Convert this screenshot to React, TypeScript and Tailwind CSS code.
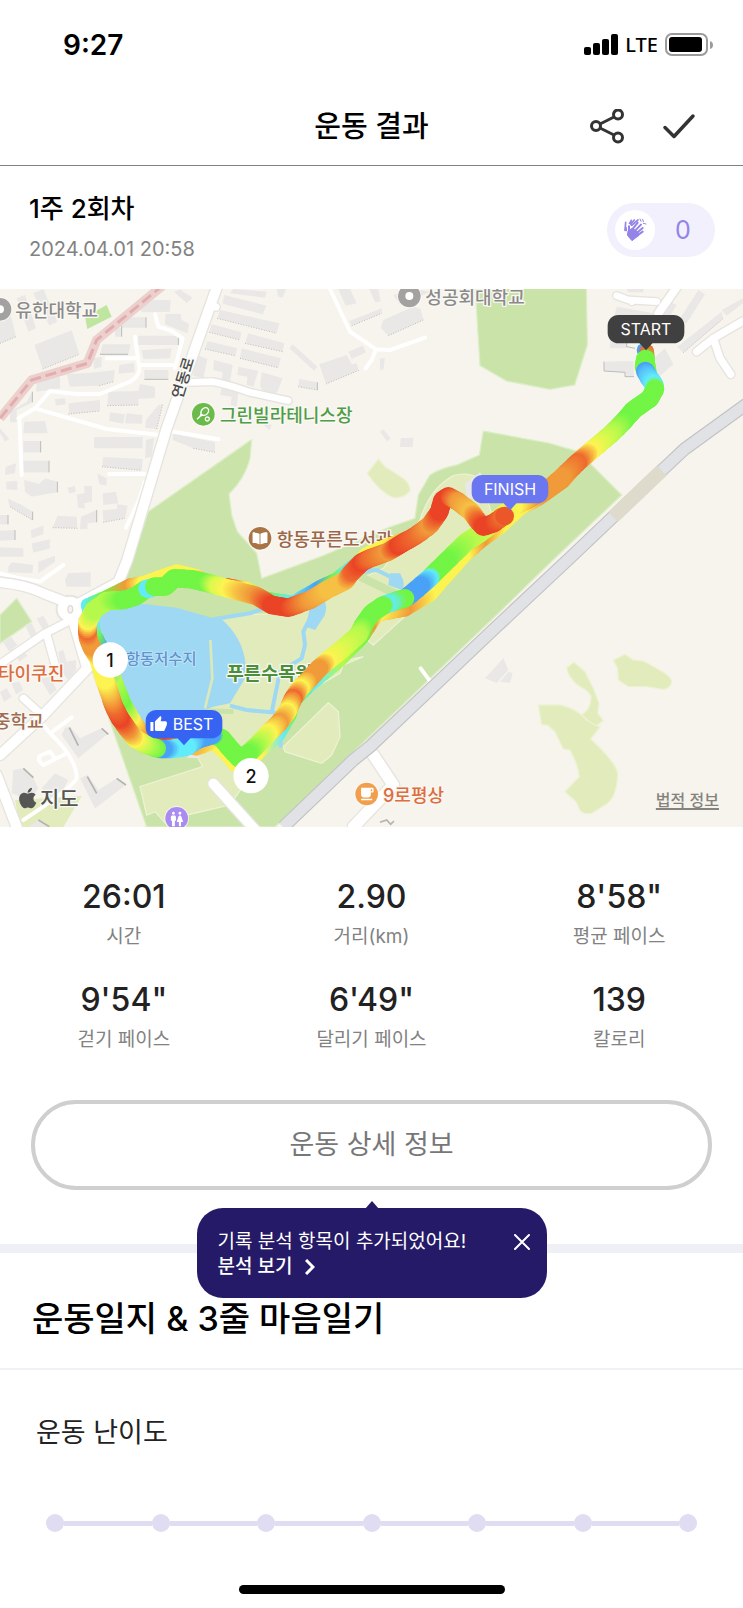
import { useState } from "react";
import { FaApple, FaBookOpen } from "react-icons/fa";
import { MdLocalCafe, MdSportsTennis, MdThumbUp, MdWc } from "react-icons/md";

type Stop = [number, number, string];

const RED = "#ea4326";
const TOMATO = "#ee6a2e";
const ORANGE = "#f09a3a";
const AMBER = "#f6c044";
const YELLOW = "#fdf351";
const LIME = "#b4f94c";
const GREEN = "#72f545";
const CYAN = "#62ecfb";
const BLUE = "#4aa2f7";

// Earlier lap, partly hidden by the later one.
const firstLap: Stop[] = [
  [1930, 195, BLUE], [1942, 198, TOMATO], [1945, 230, GREEN], [1950, 260, GREEN], [1955, 300, CYAN], [1950, 340, GREEN],
  [1860, 425, GREEN], [1770, 500, YELLOW], [1690, 590, ORANGE], [1620, 640, ORANGE], [1560, 672, YELLOW],
  [1500, 728, YELLOW], [1440, 772, ORANGE], [1392, 815, YELLOW], [1345, 868, YELLOW], [1290, 930, YELLOW],
  [1215, 975, ORANGE], [1130, 990, YELLOW], [1108, 1025, ORANGE], [1085, 1060, GREEN], [1010, 1135, LIME],
  [930, 1200, CYAN], [880, 1250, GREEN], [870, 1290, GREEN], [835, 1350, CYAN], [770, 1410, YELLOW],
  [705, 1440, YELLOW], [680, 1410, YELLOW], [640, 1373, YELLOW], [590, 1392, AMBER], [530, 1380, ORANGE],
  [480, 1372, RED], [435, 1352, TOMATO], [400, 1300, YELLOW], [372, 1250, GREEN], [345, 1180, LIME],
  [305, 1085, BLUE], [282, 1045, GREEN], [278, 1010, CYAN], [262, 960, CYAN], [320, 935, GREEN],
  [390, 900, ORANGE], [430, 893, YELLOW], [500, 868, YELLOW], [530, 858, YELLOW], [590, 872, YELLOW],
  [640, 902, RED], [685, 900, RED], [740, 910, YELLOW], [800, 940, GREEN], [880, 952, CYAN],
  [960, 905, BLUE], [1010, 882, GREEN], [1050, 850, CYAN], [1100, 806, YELLOW], [1160, 780, YELLOW],
  [1230, 755, ORANGE],
];

const secondLap: Stop[] = [
  [1936, 222, GREEN], [1932, 245, GREEN], [1934, 252, GREEN], [1936, 258, BLUE], [1945, 275, "#57c4fa"], [1962, 298, CYAN], [1965, 312, GREEN],
  [1950, 340, GREEN], [1900, 375, GREEN], [1870, 410, GREEN], [1835, 445, LIME], [1800, 475, "#dcf94e"], [1770, 500, YELLOW],
  [1733, 532, TOMATO], [1685, 578, ORANGE], [1650, 608, ORANGE], [1590, 640, ORANGE], [1540, 665, YELLOW],
  [1440, 745, "#c9f94c"], [1400, 770, LIME], [1340, 828, GREEN], [1295, 872, GREEN], [1288, 880, CYAN], [1262, 902, BLUE],
  [1235, 925, BLUE], [1222, 936, BLUE], [1215, 940, GREEN], [1195, 945, GREEN], [1158, 958, CYAN], [1148, 962, GREEN],
  [1115, 985, GREEN], [1090, 1020, GREEN], [1075, 1050, LIME], [1020, 1098, "#dcf94e"], [980, 1130, YELLOW],
  [957, 1150, ORANGE], [925, 1185, ORANGE], [900, 1210, YELLOW], [880, 1240, TOMATO], [862, 1280, YELLOW],
  [838, 1313, ORANGE], [805, 1345, YELLOW], [772, 1380, LIME], [745, 1405, GREEN], [718, 1420, GREEN],
  [690, 1390, GREEN], [665, 1360, GREEN], [645, 1352, GREEN], [635, 1350, BLUE], [590, 1365, BLUE], [560, 1385, CYAN],
  [515, 1392, CYAN], [490, 1392, BLUE], [478, 1391, BLUE], [470, 1390, GREEN], [435, 1378, LIME], [405, 1360, YELLOW],
  [385, 1335, ORANGE], [360, 1300, RED], [342, 1265, TOMATO], [325, 1215, AMBER], [315, 1185, YELLOW],
  [295, 1120, YELLOW], [274, 1085, ORANGE], [264, 1060, ORANGE], [262, 1038, TOMATO], [264, 1008, YELLOW],
  [282, 975, LIME], [320, 948, LIME], [370, 945, GREEN], [405, 935, GREEN], [435, 914, GREEN], [443, 911, CYAN],
  [455, 908, CYAN], [463, 905, GREEN], [495, 905, GREEN], [522, 880, GREEN], [570, 882, GREEN], [620, 893, GREEN],
  [655, 903, "#dcf94e"], [690, 912, YELLOW], [730, 922, AMBER], [770, 933, ORANGE], [815, 960, RED],
  [865, 968, RED], [930, 945, ORANGE], [985, 912, AMBER], [1035, 888, AMBER], [1055, 862, TOMATO],
  [1085, 832, RED], [1110, 820, TOMATO], [1165, 800, ORANGE], [1195, 782, RED], [1250, 750, TOMATO],
  [1290, 720, ORANGE], [1318, 680, RED], [1328, 645, RED], [1345, 634, RED], [1375, 650, ORANGE],
  [1415, 682, AMBER], [1435, 710, TOMATO], [1450, 725, RED], [1480, 715, RED], [1508, 695, TOMATO], [1520, 690, RED],
];

function mix(a: string, b: string, t: number) {
  const part = (i: number) => {
    const from = parseInt(a.slice(i, i + 2), 16);
    const to = parseInt(b.slice(i, i + 2), 16);
    return Math.round(from + (to - from) * t);
  };
  return `rgb(${part(1)} ${part(3)} ${part(5)})`;
}

function Track({ stops, radius }: { stops: Stop[]; radius: number }) {
  const dots: { x: number; y: number; fill: string }[] = [];
  for (let i = 0; i < stops.length - 1; i++) {
    const [x1, y1, c1] = stops[i];
    const [x2, y2, c2] = stops[i + 1];
    const steps = Math.max(1, Math.round(Math.hypot(x2 - x1, y2 - y1) / 6));
    for (let s = 0; s < steps; s++) {
      const t = s / steps;
      dots.push({ x: Math.round(x1 + (x2 - x1) * t), y: Math.round(y1 + (y2 - y1) * t), fill: mix(c1, c2, t) });
    }
  }
  return (
    <g>
      {dots.map((d, i) => (
        <circle key={i} cx={d.x} cy={d.y} r={radius} fill={d.fill} />
      ))}
    </g>
  );
}

const buildings = [
  "M0 100L32 90 48 155 0 175z", "M50 40L75 30 108 130 85 140z", "M100 25L130 12 172 110 148 122z",
  "M103 180L215 136 238 208 128 252z", "M415 55L428 45 512 45 510 80 425 82z", "M370 97H438V128H345V155H365V122z",
  "M308 178L392 178 385 208H300z", "M415 152H535V180H415z", "M425 195L515 190 510 220 430 222z", "M280 218L305 216V245L282 252z",
  "M358 240L402 234 404 262 355 266z", "M433 255H505V283H433z", "M110 290L180 275V310L108 320z", "M200 268L290 262 345 255 340 290 298 302 210 305z",
  "M325 320L415 318 420 297 465 305V338L415 342V360L322 362z", "M165 342L195 340 198 358 168 362z", "M205 355L300 345V378L207 387z",
  "M330 382L375 388 370 416 327 408z", "M380 385L428 390 425 416 375 415z", "M438 405L475 360 488 358 470 432 436 428z",
  "M282 456H428V490H282z", "M310 516L428 522 425 556 306 545z", "M438 465L462 458 455 515 435 520z", "M73 410L135 408 143 445H70z", "M70 468H122V502H70z",
  "M70 527H147V562H70z", "M17 545L48 535 45 565 15 570z", "M18 590L52 588V615L20 613z", "M72 585L118 597 135 580 172 590V622L95 635 75 620z",
  "M30 380L80 350 97 320V352L50 375V412H30z", "M0 430L28 462 15 470 0 445z", "M22 640L65 660 98 680V705L30 665z", "M0 690H24V718H0z",
  "M0 737L45 735V765L0 767z", "M92 735L130 722V748L95 760z", "M95 775L150 763V790L100 803z", "M0 787L70 790V815H0z", "M172 692L230 695 232 730 158 728z",
  "M243 695L290 675V712L262 715V732H240z", "M230 628L253 625V603H276V650L252 655 255 670 235 668z", "M202 608L225 603 228 620 208 626z", "M292 565L320 580V602L298 598z",
  "M308 625L348 620 355 655 310 660z", "M308 676L350 672 352 658 383 662 375 700 310 712z",
  "M497 87H542L545 105 568 118 562 145 495 118z", "M522 20L540 14 578 38 560 54z",
  "M673 30L800 62 788 88 668 56z", "M660 75L838 115 830 145 652 100z", "M635 118L724 142 720 165 628 142z", "M745 145L853 175 848 200 735 175z", "M622 168L712 190 705 212 615 192z", "M725 190L842 220 835 248 720 220z",
  "M590 210L622 222 610 280 580 272z", "M642 225L698 240 690 290 665 285 668 262 640 255z", "M715 245L775 258 760 305 740 300 742 275 712 270z", "M785 262L848 280 832 320 800 345 780 300z",
  "M665 308L715 320 710 365 692 360 695 335 660 330z", "M520 445L645 472V502L580 490 518 465z", "M700 12L800 20 795 38 690 25z", "M830 12L858 12 848 38 835 35z",
  "M1015 12H1050L1070 55 1037 62z", "M1108 12H1135L1142 50 1125 52z", "M1180 30L1240 12 1290 20 1200 60z", "M1048 108L1145 70V85L1055 122z", "M1150 105L1240 65 1262 72 1270 105 1165 152 1142 128z",
  "M1045 200L1088 182 1098 202 1055 222z", "M958 238L1040 210 1055 238 1070 235 1076 256 978 297z", "M868 190L878 178 952 245 942 257z", "M898 282L952 292V315L895 305z", "M1140 220H1155L1150 254H1140z",
  "M1140 440L1150 433 1172 460 1162 470z", "M1202 460L1240 458 1238 486H1200z", "M780 410L815 420 808 435z", "M1395 595L1440 562 1470 600 1450 640H1400z",
  "M1850 65L1960 85 1940 140H1880V190H1830V150z", "M1812 230L1900 228 1902 275H1875V262L1812 258z", "M1950 230L1995 190 2020 238 1960 290z", "M2095 15L2115 28 2060 115 2035 108z", "M2165 80L2170 100 2050 203 2032 185z",
  "M2229 40V55L2180 92 2165 75z", "M1880 12H1930V22H1885z", "M2010 50L2030 60 2000 110H1975z",
  "M25 845L35 832 100 840 97 865 25 862z", "M115 830L165 812V830L115 865z", "M205 865L272 862V905H200L195 885z",
  "M8 1070L33 1055 52 1080 28 1100z", "M110 1000L130 992 148 1025 130 1038z", "M75 1020L95 1015 112 1050 95 1062z", "M42 1100L62 1088 82 1112 58 1130z", "M5 1130L22 1120 38 1150 15 1160z", "M175 1100L190 1095 200 1130 228 1125V1155L205 1185 185 1160z",
  "M120 1180L150 1175 170 1215 150 1230z", "M0 1220L20 1210 35 1235 12 1252z", "M35 1195L58 1190 70 1215 48 1228z",
  "M195 1328L210 1325 240 1360 305 1330 325 1345 235 1420 185 1350z", "M40 1455L70 1450 100 1480 115 1510 90 1545 35 1525z", "M125 1510L165 1465 205 1485 180 1530 140 1540z", "M240 1480L262 1470 295 1515 350 1480 378 1500 285 1570z", "M115 1605L145 1625H85z",
  "M560 1418L590 1390 630 1395 590 1420z", "M1455 1180L1510 1120 1525 1155 1490 1194z", "M1500 1190L1525 1160 1538 1165 1530 1194z",
];

const laneRoads = [
  "M55 400L105 370 150 318 230 327H300L390 290Q418 275 418 250L405 155", "M105 370L320 432 480 450", "M58 400L65 570", "M320 220H415", "M420 240H520",
  "M465 88L475 125 515 138 548 160 525 250", "M328 567H435", "M435 590L415 650 378 728", "M520 440L655 463",
  "M990 12L1050 140 1128 193 1170 195 1275 158M1128 193L1115 225 1097 250",
  "M190 840L120 890 60 880 0 865", "M215 1297L150 1345 130 1320M150 1345Q230 1420 230 1480 215 1510 70 1605M200 1405L130 1440Q105 1420 125 1410L150 1400 165 1420", "M1262 1150L1295 1195",
];

const streets = [
  { d: "M565 292L640 290Q690 300 750 322L865 347", w: 20 },
  { d: "M648 66L630 60", w: 22 },
  { d: "M1850 32L1885 45 1970 50M1890 45L1895 50", w: 20 },
  { d: "M2035 0L1975 85", w: 24 },
  { d: "M2090 200L2140 160 2229 108M2140 160L2160 220 2192 268", w: 22 },
  { d: "M0 892Q80 900 130 925L200 952", w: 28 },
  { d: "M215 990L262 1150 130 1290 0 1410", w: 30 },
  { d: "M200 1012L130 1048 0 1138M142 1055L165 1138M70 1240L115 1280", w: 22 },
  { d: "M-10 1470L50 1626", w: 30 },
  { d: "M640 1496L770 1640", w: 30 },
  { d: "M1120 1410L1180 1500 1060 1626", w: 34 },
  { d: "M660 -20L500 430 382 825 355 892 225 962", w: 30 },
];

const railway = "M2250 350L2054 492 1990 552 1719 810 1479 1035 1110 1385 1060 1425 850 1626";

function Poi({ x, y, fill, children }: { x: number; y: number; fill: string; children?: React.ReactNode }) {
  return (
    <g transform={`translate(${x} ${y})`}>
      <circle r="37" fill="#ffffff" opacity="0.6" />
      <circle r="34" fill={fill} />
      {children}
    </g>
  );
}

function Flag({ x, y, fill, children }: { x: number; y: number; fill: string; children: React.ReactNode }) {
  return (
    <g transform={`translate(${x} ${y})`}>
      <path d="M-22 -24L0 0 22 -24z" fill={fill} />
      <rect x="-115" y="-106" width="230" height="85" rx="32" fill={fill} />
      {children}
    </g>
  );
}

function ClapIcon() {
  return (
    <svg width="24" height="24" viewBox="70 70 72 72" fill="none" stroke="currentColor" strokeLinecap="round" strokeLinejoin="round" aria-hidden="true">
      <path d="M76 107L78 83M80 104L95 77M86 96L104 76M96 92L115 76" strokeWidth="5" />
      <path d="M74 107L86 112 88 92z" fill="currentColor" stroke="none" />
      <path d="M87 92V114" strokeWidth="10" stroke="#ffffff" />
      <path d="M88 95V116M98 104L114 84M104 110L124 90M110 116L129 100M113 122L129 111" strokeWidth="6" />
      <path d="M86 108L98 101 115 112 117 123 106 131 97 138 84 123z" fill="currentColor" strokeWidth="3" />
      <path d="M121 73L124 80M129 74L131 81M139 88L131 86" strokeWidth="3" />
    </svg>
  );
}

function RouteMap() {
  const halo = "[paint-order:stroke] stroke-[#f9f8f4] stroke-[8px] [stroke-linejoin:round] font-medium";
  return (
    <section aria-label="운동 경로" className="relative">
      <svg viewBox="0 12 2229 1614" className="block h-auto w-full">
        <rect y="12" width="2229" height="1614" fill="#f7f4ed" />
        <g fill="#c9e3a9" stroke="#dceec6" strokeWidth="4">
          <path d="M445 680L750 467 755 465 750 520Q735 580 687 627L695 690 712 740 770 805 785 880 970 812 1165 728 1245 700 1255 630 1290 570Q1320 550 1370 540L1438 510 1450 438 1650 475 1735 500 1865 630 1659 825 1500 980 1260 1210 825 1626H440L330 1310 270 1140 235 960 350 910 395 825z" />
          <path d="M1425 0H1759L1762 180 1724 300 1650 313 1520 288 1440 242z" />
          <path d="M0 990L50 940 95 1010 0 1075z" />
        </g>
        <path d="M255 95L320 60 335 95 262 132z" fill="#bfe6a0" />
        <g fill="#e1ebbb" stroke="#edf2d2" strokeWidth="4">
          <path d="M1260 705Q1290 610 1360 572 1400 560 1440 580L1480 700 1400 790 1250 910 1150 960 1080 1030 1000 1120 850 1290 750 1400 700 1390 650 1340 600 1270V1010L700 990 850 985 1000 920 1150 850z" />
          <path d="M985 1253L1015 1280 1020 1355 995 1410 965 1435 855 1400 850 1385z" />
          <path d="M420 1505L608 1445 590 1410 640 1385 760 1460 690 1560 560 1590 500 1618 465 1580 440 1590z" />
          <path d="M1060 1030L1120 1080 1230 980 1180 960z" />
          <path d="M870 1240L1020 1130 1090 1115 1030 1140 1020 1165 940 1210z" />
          <path d="M1102 565L1135 522 1155 545 1210 580Q1232 600 1230 617 1215 640 1180 638 1140 622 1102 565z" />
          <path d="M1840 1125L1875 1108 1900 1125 1930 1128 1970 1150Q2015 1175 2015 1190 2010 1212 1990 1213L1940 1205H1885L1855 1185 1853 1150z" />
          <path d="M1700 1148L1722 1132 1755 1160 1780 1210 1797 1255 1793 1285 1810 1307 1785 1325 1745 1290Q1775 1270 1773 1235 1770 1220 1740 1205 1705 1180 1700 1148z" />
          <path d="M1615 1260H1680Q1730 1270 1760 1305 1785 1322 1800 1325L1772 1362Q1855 1440 1853 1470 1850 1540 1815 1560L1775 1585Q1750 1590 1740 1575L1728 1550 1695 1520 1738 1475Q1735 1440 1710 1395L1690 1392 1665 1340 1645 1322 1625 1318z" />
          <path d="M45 1545L245 1533 190 1626H60z" stroke="none" />
        </g>
        <path d="M1080 875L1215 940" stroke="#c9e3a9" strokeWidth="24" />
        <path d="M600 1276L700 1280" stroke="#c9e3a9" strokeWidth="14" />
        <path d="M290 980Q360 955 440 958L530 968 640 1000 665 1003Q730 1060 737 1140L735 1180 690 1255 640 1265 600 1280 560 1340 440 1360 400 1310 360 1210 300 1050z" fill="#9ed8f3" />
        <g fill="none" stroke="#9ed8f3" strokeWidth="12" strokeLinejoin="round">
          <path d="M640 1003L750 985 900 930M690 1262L740 1275 815 1282 840 1160 905 1120 915 1080 910 1040 950 960M820 1280L840 1300 842 1388M1080 860L1130 855 1180 880" />
        </g>
        <path d="M930 965L975 950Q985 980 965 1005L945 1035 918 1025zM1170 865L1200 865Q1220 900 1205 915L1165 900z" fill="#9ed8f3" />
        <path d="M631 1065L637 1180 615 1270" fill="none" stroke="#dbe8b8" strokeWidth="8" />

        <g fill="#e9e8e6">
          {buildings.map((d) => (
            <path key={d} d={d} />
          ))}
        </g>
        <g fill="none" stroke="#bdbcba" strokeWidth="3">
          <g strokeDasharray="3 5">
            <path d="M128 252L238 208M0 175L48 155M300 208H385M205 387L300 378M322 362L415 360M306 545L425 556M298 302L340 290M652 100L830 145M628 142L720 165M735 175L848 200M720 220L835 248M615 192L705 212M978 297L1076 256M1165 152L1270 105M1055 122L1145 85M580 490L645 502M470 432L488 358M30 665L98 705M310 712L375 700M158 728L232 730M2050 203L2170 100M895 305L952 315" />
          </g>
          <path d="M535 152V180M122 468V502M147 527V562M172 590V622M98 680V705M45 735V765M24 690V718M97 320V352M290 675V712M438 97V128M365 122V155M300 208H383M433 283H505M1812 230V258L1875 262V275H1902M1830 150L1880 165V185L1905 190M952 292V315" />
          <path d="M208 1328L235 1382M305 1330L325 1348M70 1450L100 1478M262 1475L290 1525M350 1480L378 1500M115 1605L148 1625M1140 1612L1160 1605 1172 1618 1182 1608" stroke="#b4b3b1" strokeWidth="5" />
        </g>

        <path d="M490 0L290 165 262 235 95 285 0 400" fill="none" stroke="#ecd0cd" strokeWidth="28" strokeLinejoin="round" />
        <path d="M490 0L290 165 262 235 95 285 0 400" fill="none" stroke="#e3adb0" strokeWidth="9" strokeDasharray="34 14" />

        <g fill="none" stroke="#ffffff" strokeLinecap="round" strokeLinejoin="round">
          {laneRoads.map((d) => (
            <path key={d} d={d} strokeWidth="12" />
          ))}
          {streets.map((s) => (
            <path key={s.d} d={s.d} strokeWidth={s.w + 8} stroke="#e6e4df" />
          ))}
          <circle cx="210" cy="972" r="26" stroke="#e6e4df" strokeWidth="34" />
          {streets.map((s) => (
            <path key={s.d} d={s.d} strokeWidth={s.w} />
          ))}
          <circle cx="210" cy="972" r="22" strokeWidth="30" />
        </g>
        <ellipse cx="211" cy="973" rx="7" ry="11" fill="#f7f4ed" stroke="#dddbd6" strokeWidth="4" />

        <path d="M1659 835L1500 990 1260 1222 835 1626" fill="none" stroke="#f7f4ed" strokeWidth="8" />
        <g fill="none">
          <path d={railway} stroke="#c3c3c5" strokeWidth="40" />
          <path d={railway} stroke="#e1e2e6" strokeWidth="33" />
          <path d="M1985 557L1839 696" stroke="#dedbcd" strokeWidth="42" />
        </g>

        <g className="font-['Inter','Noto_Sans_CJK_KR',sans-serif]" fontSize="54">
          <Poi x={0} y={73} fill="#a3a2a0">
            <circle r="12" fill="#ffffff" />
          </Poi>
          <text x="46" y="95" fill="#8b8a88" className={halo}>유한대학교</text>
          <Poi x={1228} y={33} fill="#a3a2a0">
            <circle r="12" fill="#ffffff" />
          </Poi>
          <text x="1276" y="56" fill="#8b8a88" className={halo}>성공회대학교</text>
          <text x="660" y="411" fill="#4f9d47" className={halo}>그린빌라테니스장</text>
          <text x="830" y="783" fill="#9c6748" className={halo}>항동푸른도서관</text>
          <text x="-66" y="16" fontSize="46" fill="#4a4a4a" className={halo} transform="translate(550 276) rotate(-73)">연동로</text>
          <text x="378" y="1138" fontSize="46" fill="#5f93cf" className="font-medium stroke-[#c3e6f7] stroke-[5px] [paint-order:stroke]">항동저수지</text>
          <text x="680" y="1184" fontSize="56" fill="#4a8f3a" className="stroke-[#f9f8f4] stroke-[8px] font-bold [paint-order:stroke] [stroke-linejoin:round]">푸른수목원</text>
          <text x="-6" y="1184" fill="#de6c3c" className={halo}>타이쿠진</text>
          <text x="-18" y="1328" fill="#a06c50" className={halo}>중학교</text>
          <text x="1149" y="1550" fill="#de6c3c" className={halo}>9로평상</text>
          <text x="120" y="1562" fontSize="63" fill="#565654" className={halo}>지도</text>
          <FaApple x={48} y={1504} size={70} color="#565654" />
          <Poi x={610} y={388} fill="#6bbb4a">
            <MdSportsTennis x={-24} y={-24} size={48} color="#ffffff" />
          </Poi>
          <Poi x={780} y={760} fill="#a87445">
            <FaBookOpen x={-23} y={-23} size={46} color="#ffffff" />
          </Poi>
          <Poi x={1100} y={1527} fill="#f19f4d">
            <MdLocalCafe x={-25} y={-25} size={50} color="#ffffff" />
          </Poi>
          <Poi x={530} y={1600} fill="#a98bf2">
            <MdWc x={-26} y={-24} size={52} color="#ffffff" />
          </Poi>

          <Track stops={firstLap} radius={20} />
          <Track stops={secondLap} radius={28} />

          <g fontSize="48" textAnchor="middle" fill="#ffffff">
            <Flag x={1938} y={196} fill="#404040">
              <text y="-46">START</text>
            </Flag>
            <Flag x={1530} y={676} fill="#6b76f1">
              <text y="-46">FINISH</text>
            </Flag>
            <Flag x={552} y={1381} fill="#3763f3">
              <MdThumbUp x={-103} y={-90} size={54} color="#ffffff" />
              <text x="27" y="-46">BEST</text>
            </Flag>
            <circle cx="331" cy="1125" r="53" />
            <circle cx="753" cy="1472" r="53" />
            <g fill="#111111" fontSize="54" className="font-medium">
              <text x="330" y="1146">1</text>
              <text x="753" y="1493">2</text>
            </g>
          </g>
        </g>
      </svg>
      <a href="#legal" className="absolute right-6 bottom-[15px] text-base leading-6 font-medium text-[#85837e] underline decoration-2 underline-offset-2">
        법적 정보
      </a>
    </section>
  );
}

const stats = [
  { value: "26:01", label: "시간" },
  { value: "2.90", label: "거리(km)" },
  { value: "8'58\"", label: "평균 페이스" },
  { value: "9'54\"", label: "걷기 페이스" },
  { value: "6'49\"", label: "달리기 페이스" },
  { value: "139", label: "칼로리" },
];

const levels = [1, 2, 3, 4, 5, 6, 7];

function StatusBar() {
  return (
    <div className="flex h-[88px] items-center justify-between pt-0.5 pr-[30px] pl-[63px]">
      <span className="text-[28px] leading-8 font-semibold">9:27</span>
      <div className="flex items-center gap-[7px]">
        <svg width="34" height="22" viewBox="0 0 34 22" aria-hidden="true">
          <rect x="0" y="13" width="7" height="8" rx="2" />
          <rect x="9" y="9" width="7" height="12" rx="2" />
          <rect x="18" y="5" width="7" height="16" rx="2" />
          <rect x="27" y="0" width="7" height="21" rx="2" />
        </svg>
        <span className="font-['Noto_Sans',sans-serif] text-xl leading-6 font-medium">LTE</span>
        <svg width="48" height="24" viewBox="0 0 48 24" aria-hidden="true">
          <rect x="1" y="1" width="41" height="21" rx="6" fill="none" stroke="#9b9b9b" strokeWidth="2" />
          <rect x="4" y="4" width="33" height="15" rx="3" />
          <path d="M45 8q3 1 3 4t-3 4z" fill="#9b9b9b" />
        </svg>
      </div>
    </div>
  );
}

export default function App() {
  const [tipOpen, setTipOpen] = useState(true);

  return (
    <main className="min-h-screen bg-white font-['Inter','Noto_Sans_CJK_KR',sans-serif] text-black">
      <StatusBar />

      <header className="grid h-[78px] grid-cols-[1fr_auto_1fr] items-center border-b border-[#828282] pr-[46px] pl-[46px]">
        <h1 className="col-start-2 text-[29px] leading-10 font-medium">운동 결과</h1>
        <div className="flex items-center justify-end gap-9">
          <button type="button" aria-label="공유">
            <svg width="36" height="36" viewBox="0 0 36 36" fill="none" stroke="#333333" strokeWidth="3" className="block">
              <circle cx="7" cy="17" r="4.5" />
              <circle cx="29" cy="5.500" r="4.5" />
              <circle cx="29" cy="28.500" r="4.5" />
              <path d="M11 15L25 8M11 19L25 26" />
            </svg>
          </button>
          <button type="button" aria-label="완료">
            <svg width="36" height="36" viewBox="0 0 36 36" fill="none" stroke="#333333" strokeWidth="3.5" strokeLinecap="round" strokeLinejoin="round" className="block">
              <path d="M4 18.500L13 27.500 32 7" />
            </svg>
          </button>
        </div>
      </header>

      <section className="flex justify-between pt-[25px] pr-7 pb-[25px] pl-[29px]">
        <div>
          <h2 className="text-[26px] leading-9 font-medium">1주 2회차</h2>
          <p className="mt-2 mb-px text-xl leading-7 text-[#828282]">2024.04.01 20:58</p>
        </div>
        <button type="button" aria-label="박수 0" className="mb-[7px] flex h-[54px] w-[108px] items-center self-end rounded-full bg-[#f2f0fc] pr-3 pl-2 text-[#9384e8]">
          <span className="flex size-10 items-center justify-center rounded-full bg-white">
            <ClapIcon />
          </span>
          <span className="flex-1 pl-2 text-center text-[25px] leading-8">0</span>
        </button>
      </section>

      <RouteMap />

      <section className="pt-[50px] pb-[54px]">
        <dl className="grid grid-cols-3 gap-y-[29px] text-center">
          {stats.map((s) => (
            <div key={s.label} className="flex flex-col-reverse gap-1.5">
              <dt className="text-[19px] leading-7 text-[#828282]">{s.label}</dt>
              <dd className="text-[32px] leading-10 font-medium text-[#222222]">{s.value}</dd>
            </div>
          ))}
        </dl>
        <div className="relative mx-[31px] mt-[46px]">
          <button type="button" className="h-[90px] w-full rounded-full border-4 border-[#cfcfcf] text-[27px] leading-10 text-[#777777]">
            운동 상세 정보
          </button>
          {tipOpen && (
            <div role="status" className="absolute top-full left-1/2 mt-[18px] h-[90px] w-[350px] -translate-x-1/2 rounded-[26px] bg-[#251a68] pt-[21px] pr-[17px] pl-[21px] text-white">
              <svg width="14" height="8" viewBox="0 0 14 8" className="absolute -top-[7px] left-1/2 -translate-x-1/2" aria-hidden="true">
                <path d="M0 8L7 0 14 8z" fill="#251a68" />
              </svg>
              <div className="flex items-center justify-between">
                <p className="text-[19px] leading-[25px]">기록 분석 항목이 추가되었어요!</p>
                <button type="button" aria-label="닫기" onClick={() => setTipOpen(false)}>
                  <svg width="16" height="16" viewBox="0 0 16 16" stroke="#ffffff" strokeWidth="2" strokeLinecap="round" className="block">
                    <path d="M1 1L15 15M15 1L1 15" />
                  </svg>
                </button>
              </div>
              <a href="#analysis" className="flex items-center gap-3 text-[19px] leading-[25px] font-medium">
                분석 보기
                <svg width="10" height="16" viewBox="0 0 10 16" fill="none" stroke="#ffffff" strokeWidth="3" aria-hidden="true">
                  <path d="M1 1L8 8 1 15" />
                </svg>
              </a>
            </div>
          )}
        </div>
      </section>

      <section className="border-t-[9px] border-[#efeff6]">
        <h2 className="border-b-2 border-[#f1f0f8] px-8 pt-[42px] pb-[25px] text-[34px] leading-[48px] font-medium">
          운동일지 &amp; 3줄 마음일기
        </h2>
        <fieldset className="px-9 pt-[43px]">
          <legend className="float-left w-full text-[27px] leading-10 text-[#222222]">운동 난이도</legend>
          <div className="clear-both px-[10px] pt-[61px]">
            <div className="flex items-center">
              {levels.map((n) => (
                <span key={n} className={n === 1 ? "flex items-center" : "flex flex-1 items-center"}>
                  {n > 1 && <span className="h-[5px] flex-1 bg-[#e0dcf1]" />}
                  <input
                    type="radio"
                    name="difficulty"
                    value={n}
                    aria-label={`난이도 ${n}`}
                    className="block size-[18px] appearance-none rounded-full bg-[#e0dcf1] checked:bg-[#9384e8]"
                  />
                </span>
              ))}
            </div>
          </div>
        </fieldset>
      </section>

      <div className="flex justify-center pt-[53px] pb-[14px]">
        <div className="h-[9px] w-[266px] rounded-full bg-black" />
      </div>
    </main>
  );
}
